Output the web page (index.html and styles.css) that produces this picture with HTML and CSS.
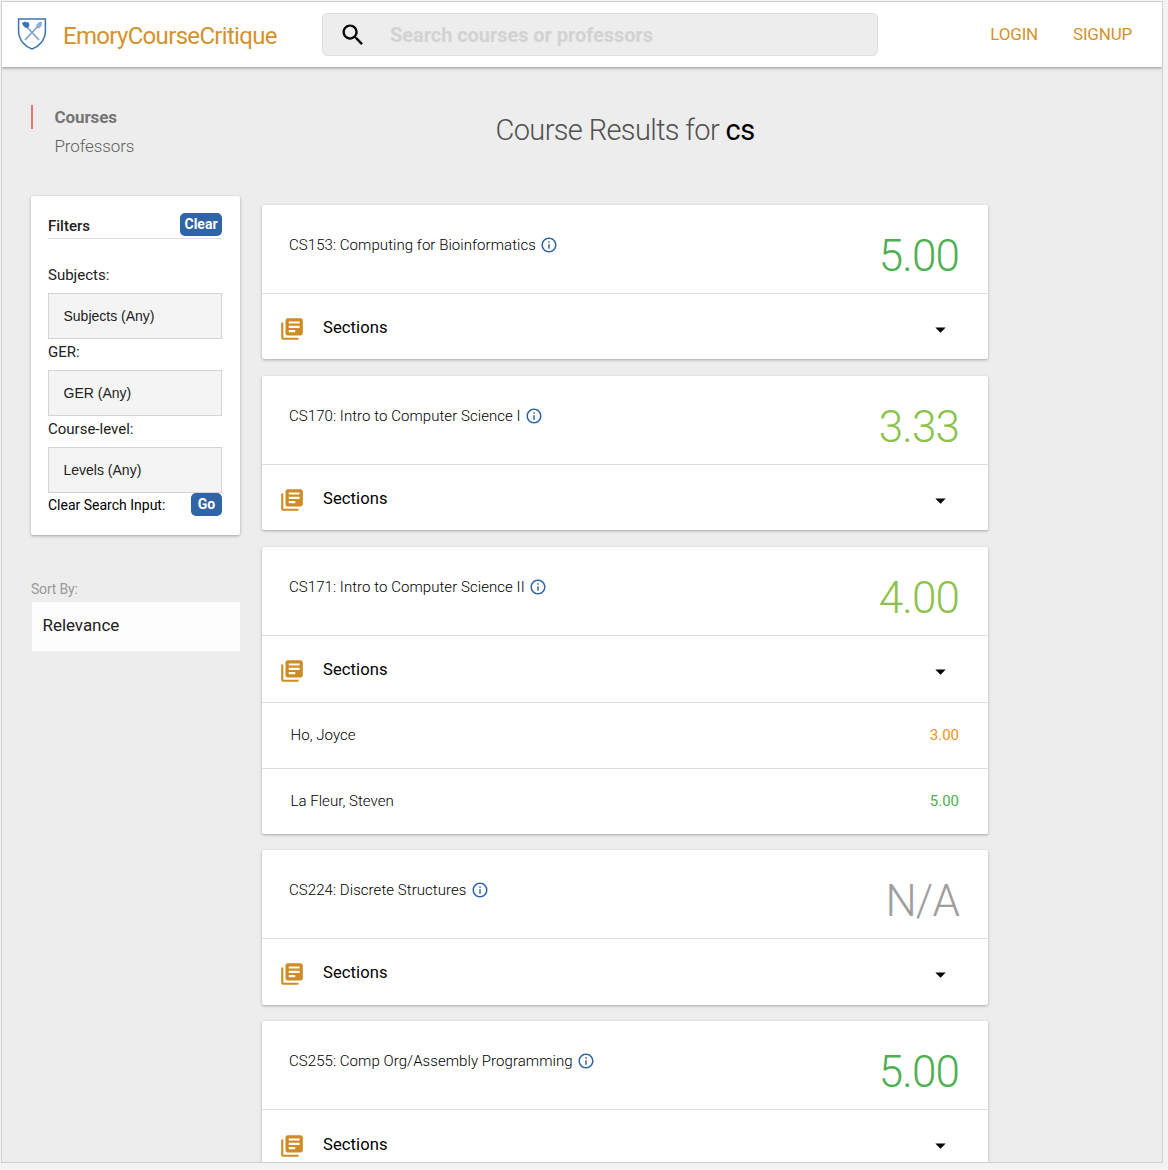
FILE: index.html
```
<!DOCTYPE html>
<html lang="en">
<head>
<meta charset="utf-8">
<title>EmoryCourseCritique</title>
<link rel="stylesheet" href="styles.css">
</head>
<body>
<svg class="defs" aria-hidden="true">
  <symbol id="info" viewBox="0 0 24 24"><path d="M11 7h2v2h-2zm0 4h2v6h-2zm1-9C6.480 2 2 6.480 2 12s4.480 10 10 10 10-4.480 10-10S17.520 2 12 2zm0 18c-4.410 0-8-3.590-8-8s3.590-8 8-8 8 3.590 8 8-3.590 8-8 8z"/></symbol>
  <symbol id="books" viewBox="0 0 24 24"><path d="M4 6H2v14c0 1.100.9 2 2 2h14v-2H4V6zm16-4H8c-1.100 0-2 .9-2 2v12c0 1.100.9 2 2 2h12c1.100 0 2-.9 2-2V4c0-1.100-.9-2-2-2zm-1 9H9V9h10v2zm-4 4H9v-2h6v2zm4-8H9V5h10v2z"/></symbol>
  <symbol id="caret" viewBox="0 0 24 24"><path d="M7 10l5 5 5-5z"/></symbol>
</svg>
<div class="window">
  <header class="topbar">
    <svg class="shield" viewBox="0 0 30 34">
      <path class="shield-edge" d="M1.600 2H28.400V14C28.400 23 22 29.500 15 32 8 29.500 1.600 23 1.600 14Z"/>
      <path class="shield-line" d="M8 8L22 23M22 8L8 23"/>
      <path class="shield-fill" d="M5 6l3-1.500 1.500 1 2-.5 1 3-1.500 3-3-.5-2-2z"/>
      <path class="shield-torch" d="M19 8l3-3 3-.3-.3 4-3 3-2-1.200z"/>
    </svg>
    <span class="brand">EmoryCourseCritique</span>
    <div class="search">
      <svg class="search-icon" viewBox="0 0 24 24"><path d="M15.500 14h-.79l-.28-.27C15.410 12.590 16 11.110 16 9.500 16 5.910 13.090 3 9.500 3S3 5.910 3 9.500 5.910 16 9.500 16c1.610 0 3.090-.59 4.230-1.570l.27.28v.79l5 4.990L20.490 19l-4.990-5zm-6 0C7.010 14 5 11.990 5 9.500S7.010 5 9.500 5 14 7.010 14 9.500 11.990 14 9.500 14z"/></svg>
      <span class="placeholder">Search courses or professors</span>
    </div>
    <nav class="account"><span>LOGIN</span><span>SIGNUP</span></nav>
  </header>
  <div class="page">
    <aside class="sidebar">
      <ul class="tabs"><li class="active">Courses</li><li>Professors</li></ul>
      <section class="filters">
        <div class="filters-head"><b>Filters</b><button class="btn">Clear</button></div>
        <div class="label first">Subjects:</div><div class="select">Subjects (Any)</div>
        <div class="label">GER:</div><div class="select">GER (Any)</div>
        <div class="label">Course-level:</div><div class="select">Levels (Any)</div>
        <div class="clear-row"><span>Clear Search Input:</span><button class="btn go">Go</button></div>
      </section>
      <div class="sort-label">Sort By:</div>
      <div class="sort">Relevance</div>
    </aside>
    <main class="results">
      <h1>Course Results for <b>cs</b></h1>
      <article class="card">
        <div class="head"><span class="name">CS153: Computing for Bioinformatics</span><svg class="info"><use href="#info"/></svg><span class="score green">5.00</span></div>
        <div class="sections"><svg class="books"><use href="#books"/></svg><span>Sections</span><svg class="caret"><use href="#caret"/></svg></div>
      </article>
      <article class="card">
        <div class="head"><span class="name">CS170: Intro to Computer Science I</span><svg class="info"><use href="#info"/></svg><span class="score lime">3.33</span></div>
        <div class="sections"><svg class="books"><use href="#books"/></svg><span>Sections</span><svg class="caret"><use href="#caret"/></svg></div>
      </article>
      <article class="card">
        <div class="head"><span class="name">CS171: Intro to Computer Science II</span><svg class="info"><use href="#info"/></svg><span class="score lime">4.00</span></div>
        <div class="sections"><svg class="books"><use href="#books"/></svg><span>Sections</span><svg class="caret"><use href="#caret"/></svg></div>
        <div class="teacher"><span>Ho, Joyce</span><span class="orange">3.00</span></div>
        <div class="teacher"><span>La Fleur, Steven</span><span class="green">5.00</span></div>
      </article>
      <article class="card">
        <div class="head"><span class="name">CS224: Discrete Structures</span><svg class="info"><use href="#info"/></svg><span class="score gray">N/A</span></div>
        <div class="sections"><svg class="books"><use href="#books"/></svg><span>Sections</span><svg class="caret"><use href="#caret"/></svg></div>
      </article>
      <article class="card">
        <div class="head"><span class="name">CS255: Comp Org/Assembly Programming</span><svg class="info"><use href="#info"/></svg><span class="score green">5.00</span></div>
        <div class="sections"><svg class="books"><use href="#books"/></svg><span>Sections</span><svg class="caret"><use href="#caret"/></svg></div>
      </article>
    </main>
  </div>
</div>
</body>
</html>
```
FILE: styles.css
```
* { box-sizing: border-box; }
body { margin: 0; height: 1170px; padding: 1px; background: #f3f3f3; font-family: Roboto, sans-serif; overflow: hidden; }
.defs { display: none; }
svg { flex: none; }
.window { width: 1162px; height: 1162px; border: 1px solid #cfcfcf; background: #ededed; overflow: hidden; }
.topbar { height: 65px; display: flex; align-items: center; background: #fff; padding: 0 30px 0 15px; box-shadow: 0 1px 3px rgba(0,0,0,.4); }
.shield { width: 30px; height: 34px; margin-bottom: 2px; }
.shield-edge { fill: #fff; stroke: #3b74b0; stroke-width: 1.5; }
.shield-line { stroke: #7da4cb; stroke-width: 1.8; }
.shield-fill { fill: #3b74b0; }
.shield-torch { fill: #8fb0d2; }
.brand { width: 275px; padding: 3px 0 0 16px; font-size: 24px; letter-spacing: -.68px; color: #d5922b; white-space: nowrap; }
.search { width: 556px; height: 43px; display: flex; align-items: center; padding-left: 16px; background: #ededed; border: 1px solid #e0e0e0; border-radius: 5px; flex: none; }
.search-icon { width: 28px; height: 28px; }
.placeholder { margin-left: 23px; font-size: 20px; letter-spacing: -.05px; font-weight: 700; color: #d2d2d2; }
.account { margin-left: auto; display: flex; gap: 35px; font-size: 17px; letter-spacing: -.2px; color: #d5922b; padding-bottom: 1px; }
.page { display: flex; }
.sidebar { width: 209px; margin-left: 29px; flex: none; }
.tabs { list-style: none; margin: 38px 0 0; padding: 0; font-size: 17px; letter-spacing: -.1px; color: #757575; }
.tabs li { height: 24px; line-height: 25px; margin-bottom: 5px; padding-left: 21.500px; border-left: 2px solid transparent; font-weight: 300; color: #606060; }
.tabs .active { border-color: #ee6e73; font-weight: 700; color: #757575; }
.filters { height: 339px; margin-top: 38px; padding: 17px 18px 0 17px; background: #fff; border-radius: 2px; box-shadow: 0 1px 3px rgba(0,0,0,.32); font-size: 15px; color: #212121; }
.filters-head { height: 26px; display: flex; justify-content: space-between; border-bottom: 1px solid #ddd; line-height: 26px; }
.filters-head b { font-weight: 500; font-size: 15px; }
.btn { height: 23px; width: 42px; padding: 0; border: 0; border-radius: 5px; background: #3065a5; color: #fff; font: 700 14px/21px Roboto, sans-serif; }
.label { height: 31px; line-height: 26px; }
.label.first { height: 54px; line-height: 73px; }
.select { height: 46px; padding-left: 14.500px; border: 1px solid #d4d4d4; background: #f4f4f4; font: 14px/44px "Liberation Sans", sans-serif; }
.clear-row { display: flex; justify-content: space-between; line-height: 25px; font-size: 14px; color: #000; white-space: nowrap; }
.go { width: 31px; }
.sort-label { margin-top: 45px; height: 22px; line-height: 19px; font-size: 14px; letter-spacing: -.2px; color: #9a9a9a; }
.sort { height: 49px; line-height: 47px; width: 208px; margin-left: .5px; padding-left: 11px; background: #fdfdfd; font-size: 17px; letter-spacing: -.05px; color: #212121; }
.results { width: 726px; margin-left: 22px; flex: none; }
h1 { height: 138px; margin: 0; line-height: 126px; text-align: center; font-size: 29px; letter-spacing: -.62px; font-weight: 300; color: #505050; }
h1 b { font-weight: 400; color: #000; }
.card { background: #fff; margin-bottom: 16.700px; border-radius: 2px; box-shadow: 0 1px 3px rgba(0,0,0,.3); }
.head { height: 88.200px; display: flex; align-items: flex-start; padding: 30px 29px 0 27px; }
.name { line-height: 20px; font-size: 15px; letter-spacing: .06px; font-weight: 300; color: #000; }
.info { width: 18px; height: 18px; margin: 1px 0 0 4px; fill: #3065a5; }
.score { margin-left: auto; line-height: 43px; font-size: 44px; letter-spacing: -.9px; font-weight: 300; }
.green { color: #4caf50; }
.lime { color: #8bc34a; }
.orange { color: #f0911a; }
.gray { color: #9e9e9e; }
.sections { height: 66.200px; display: flex; align-items: center; padding: 5px 35px 0 17px; border-top: 1px solid #ddd; font-size: 16.600px; color: #000; }
.sections span { margin: -3px 0 0 18px; letter-spacing: .08px; }
.books { width: 26px; height: 26px; fill: #d08c24; }
.caret { width: 25px; height: 25px; margin-left: auto; }
.teacher { height: 66px; display: flex; align-items: center; justify-content: space-between; padding: 0 29px 0 28.500px; border-top: 1px solid #ddd; font-size: 15.100px; font-weight: 300; color: #000; }
.teacher span + span { font-weight: 400; font-size: 15px; }
```
